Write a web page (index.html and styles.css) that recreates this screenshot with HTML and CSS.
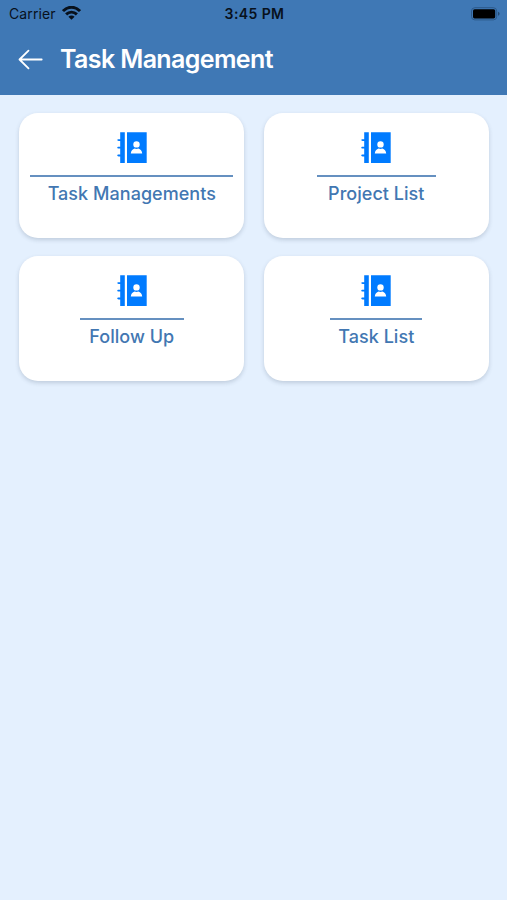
FILE: index.html
```html
<!DOCTYPE html>
<html lang="en">
<head>
<meta charset="utf-8">
<title>Task Management</title>
<link rel="stylesheet" href="styles.css">
</head>
<body>
<svg class="defs" width="0" height="0" aria-hidden="true">
  <symbol id="contact-book" viewBox="0 0 30 31">
    <path fill="#007bff" d="M3.2 .3H7.8V31H3.2V24.4H1.6C-.2 24.4-.2 22.6 1.6 22.6H3.2V16.6H1.6C-.2 16.6-.2 14.8 1.6 14.8H3.2V9H1.6C-.2 9-.2 7.2 1.6 7.2H3.2ZM10 .3H29.7V31H10Z"/>
    <circle cx="19.5" cy="12.4" r="3.2" fill="#fff"/>
    <path fill="#fff" d="M13.8 21.6C13.9 18.7 15.6 17.2 17.6 16.5Q19.5 17.4 21.4 16.5C23.4 17.2 25.1 18.7 25.2 21.6Z"/>
  </symbol>
</svg>
<header class="header">
  <div class="status">
    <div class="carrier"><span>Carrier</span>
      <svg width="19" height="14" viewBox="0 0 19 14" fill="none" stroke="#08111c" stroke-width="2.9"><path d="M1 5.1C6-.1 13-.1 18 5.1M4.1 8.4C7.2 5.3 11.8 5.3 14.9 8.4"/><path d="M9.5 13.8L6.4 10.8C8.2 9.1 10.8 9.1 12.6 10.8Z" fill="#08111c" stroke="none"/></svg>
    </div>
    <time class="time">3:45 PM</time>
    <svg class="battery" width="30" height="14" viewBox="0 0 30 14"><rect x="1.5" y=".7" width="25.2" height="12.2" rx="3.4" fill="none" stroke="#2c598a" stroke-width="1"/><rect x="3" y="2.2" width="22.2" height="9.2" rx="1.6" fill="#000"/><path d="M28 4.8Q29.6 5.3 29.6 6.8T28 8.8Z" fill="#254c76"/></svg>
  </div>
  <div class="nav">
    <svg class="back" width="26" height="22" viewBox="0 0 26 22" fill="none" stroke="#fff" stroke-width="1.8" stroke-linecap="round" stroke-linejoin="round"><path d="M24.7 10.5H2.5M11.5 1.7L2.5 10.5L11.5 19.3"/></svg>
    <h1 class="title">Task Management</h1>
  </div>
</header>
<main class="grid">
  <section class="card"><svg class="icon"><use href="#contact-book"/></svg><hr class="rule rule-managements"><h2 class="label">Task Managements</h2></section>
  <section class="card"><svg class="icon"><use href="#contact-book"/></svg><hr class="rule rule-projects"><h2 class="label">Project List</h2></section>
  <section class="card"><svg class="icon"><use href="#contact-book"/></svg><hr class="rule rule-follow"><h2 class="label">Follow Up</h2></section>
  <section class="card"><svg class="icon"><use href="#contact-book"/></svg><hr class="rule rule-tasks"><h2 class="label">Task List</h2></section>
</main>
</body>
</html>
```
FILE: styles.css
```css
* { box-sizing: border-box; }
body {
  margin: 0;
  min-height: 900px;
  background: #e4f0fe;
  font-family: Inter, "Liberation Sans", sans-serif;
}
svg { display: block; flex: none; }
.defs { position: absolute; }
.header { height: 95px; background: #3f78b5; }
.status {
  display: grid;
  grid-template-columns: 1fr auto 1fr;
  align-items: center;
  height: 27px;
  padding: 0 7px 0 9px;
  color: #08111c;
}
.carrier { display: flex; align-items: center; gap: 6px; font-size: 14px; letter-spacing: 0.12px; }
.carrier svg { margin-top: -2px; }
.time { font-size: 14px; font-weight: 600; letter-spacing: 0.4px; }
.battery { justify-self: end; }
.nav { display: flex; align-items: center; height: 65px; padding-left: 17px; }
.back { margin-right: 17px; }
.title { margin: 0 0 2px; font-size: 25px; line-height: 32px; font-weight: 600; letter-spacing: -0.62px; color: #fff; white-space: nowrap; }
.grid {
  display: grid;
  grid-template-columns: 225px 225px;
  grid-auto-rows: 125px;
  gap: 18px 19.5px;
  padding: 18px 0 0 19.3px;
}
.card {
  display: flex;
  flex-direction: column;
  align-items: center;
  padding-top: 19px;
  border-radius: 19px;
  background: #fff;
  box-shadow: 0 2px 4px rgba(45, 65, 90, 0.2);
}
.icon { width: 30px; height: 31px; }
.rule { width: 100px; height: 2px; margin: 12px 0 0; border: 0; background: #6590c0; flex: none; }
.rule-managements { width: 203px; }
.rule-projects { width: 119px; }
.rule-follow { width: 104px; }
.rule-tasks { width: 92px; }
.label { margin: 4.5px 0 0; font-size: 18px; line-height: 24px; font-weight: 550; letter-spacing: 0.04px; color: #4277b2; white-space: nowrap; }
```
